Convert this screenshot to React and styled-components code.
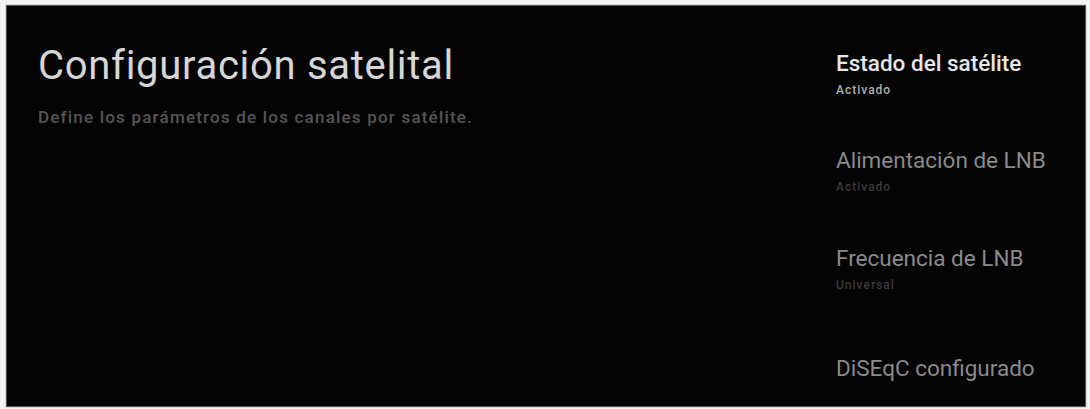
import React from 'react';
import styled, { createGlobalStyle } from 'styled-components';

const GlobalStyle = createGlobalStyle`
  html, body {
    margin: 0;
    padding: 0;
    background: #f4f4f4;
  }
  body {
    font-family: Roboto, "Noto Sans", "Liberation Sans", sans-serif;
  }
`;

const Frame = styled.div`
  box-sizing: border-box;
  width: 1090px;
  height: 409px;
  padding: 6px 5px 3px 7px;
  background: #f4f4f4;
`;

const Screen = styled.div`
  display: flex;
  height: 100%;
  background: #040404;
  box-shadow: 0 0 1px 1px #555;
`;

const Intro = styled.div`
  flex: 1;
  padding: 37px 0 0 31px;
`;

export const Title = styled.h1`
  margin: 0;
  font-size: 40px;
  font-weight: 400;
  letter-spacing: 0.7px;
  line-height: 1.171;
  color: #d6d6d6;
`;

const Description = styled.p`
  margin: 18px 0 0;
  font-size: 17px;
  font-weight: 500;
  letter-spacing: 1.2px;
  line-height: 1.171;
  color: #555555;
`;

const Menu = styled.div`
  display: flex;
  flex-direction: column;
  width: 249px;
  padding-top: 44px;
`;

const Item = styled.div`
  display: flex;
  flex-direction: column;
  height: ${p => p.$height}px;
`;

const ItemLabel = styled.div`
  font-size: 22.5px;
  font-weight: ${p => (p.$active ? 500 : 400)};
  line-height: 1.171;
  color: ${p => (p.$active ? '#e6e6e6' : '#8a8a8a')};
`;

const ItemValue = styled.div`
  margin-top: 7px;
  font-size: 12px;
  font-weight: 500;
  letter-spacing: 1px;
  line-height: 1.171;
  color: ${p => (p.$active ? '#b0b0b0' : '#3a3a3a')};
`;

const items = [
  { label: 'Estado del satélite', value: 'Activado', active: true, height: 97 },
  { label: 'Alimentación de LNB', value: 'Activado', height: 98 },
  { label: 'Frecuencia de LNB', value: 'Universal', height: 110 },
  { label: 'DiSEqC configurado', height: 40 },
];

const App = () => (
  <>
    <GlobalStyle />
    <Frame>
      <Screen>
        <Intro>
          <Title>Configuración satelital</Title>
          <Description>Define los parámetros de los canales por satélite.</Description>
        </Intro>
        <Menu>
          {items.map(item => (
            <Item key={item.label} $height={item.height}>
              <ItemLabel $active={item.active}>{item.label}</ItemLabel>
              {item.value && <ItemValue $active={item.active}>{item.value}</ItemValue>}
            </Item>
          ))}
        </Menu>
      </Screen>
    </Frame>
  </>
);

export default App;
